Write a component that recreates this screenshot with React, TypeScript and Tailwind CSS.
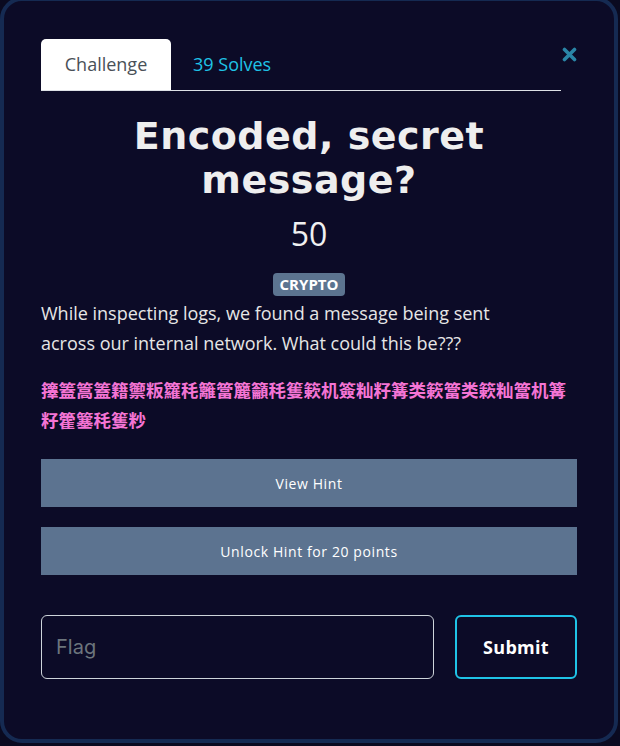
import { useState } from 'react'

const cipher =
  '籜篕篙篕籍籞粄籮秏籬簹籭籲秏篗簌机簽籼籽篝类簌簹类簌籼簹机篝籽籗簺秏篗粆'

export default function App() {
  const [flag, setFlag] = useState('')

  return (
    <div className="w-[620px] h-[746px] overflow-hidden bg-[#0a0a20]">
      <div
        className="w-[618px] h-[746px] -mt-[3px] rounded-[22px] border-[4px] border-[#152a52] bg-[#0c0b27] px-[37px] pt-[38px]"
        style={{ fontFamily: '"Open Sans", "Noto Sans", sans-serif' }}
      >
        {/* tabs */}
        <div className="flex items-start">
          <div className="flex flex-1 border-b border-[#dee2e6]">
            <div className="h-[51px] w-[130px] rounded-t-[5px] bg-white flex items-center justify-center text-[18px] text-[#495057]">
              Challenge
            </div>
            <div className="h-[51px] px-[22px] flex items-center text-[18px] text-[#1fc3e6]">
              39 Solves
            </div>
          </div>
          <button className="w-[16px] mt-[8px] flex justify-center">
            <svg width="15" height="15" viewBox="0 0 15 15">
              <path d="M2.5 2.5 L12.5 12.5 M12.5 2.5 L2.5 12.5" stroke="#2a85a6" strokeWidth="3.6" strokeLinecap="round" />
            </svg>
          </button>
        </div>

        {/* title */}
        <h1
          className="mt-[23px] text-center text-[38px] leading-[44px] font-bold tracking-[0.5px] text-[#eeeeee]"
          style={{ fontFamily: '"DejaVu Sans", sans-serif' }}
        >
          Encoded, secret
          <br />
          message?
        </h1>
        <div className="mt-[12px] text-center text-[32px] leading-[40px] text-[#f0f0f0]">50</div>
        <div className="mt-[19px] flex justify-center">
          <span className="rounded-[4px] bg-[#5c7490] px-[7px] text-[15px] leading-[23px] font-bold text-white">
            CRYPTO
          </span>
        </div>

        {/* description */}
        <p className="mt-[2px] text-[18px] leading-[30px] text-[#e6e6e6]">
          While inspecting logs, we found a message being sent
          <br />
          across our internal network. What could this be???
        </p>
        <p
          className="mt-[17px] text-[17.5px] leading-[30px] font-bold text-[#f474d4] break-all"
          style={{ fontFamily: '"Noto Sans CJK SC", "Noto Sans CJK TC", sans-serif' }}
        >
          {cipher}
        </p>

        {/* hints */}
        <button className="mt-[24px] block w-full h-[48px] bg-[#5c7390] text-[14px] tracking-[0.6px] text-white">
          View Hint
        </button>
        <button className="mt-[20px] block w-full h-[48px] bg-[#5c7390] text-[14px] tracking-[0.6px] text-white">
          Unlock Hint for 20 points
        </button>

        {/* submit row */}
        <div className="mt-[40px] flex gap-[21px]">
          <input
            value={flag}
            onChange={(e) => setFlag(e.target.value)}
            placeholder="Flag"
            className="flex-1 h-[64px] rounded-[6px] border border-[#ced4da] bg-transparent px-[14px] text-[20px] text-white placeholder:text-[#6c757d] outline-none"
            style={{ fontFamily: 'Inter, sans-serif' }}
          />
          <button
            className="w-[122px] h-[64px] rounded-[6px] border-2 border-[#1fc3e6] text-[18px] font-bold tracking-[0.3px] text-white"
            style={{ fontFamily: '"Open Sans", sans-serif' }}
          >
            Submit
          </button>
        </div>
      </div>
    </div>
  )
}
